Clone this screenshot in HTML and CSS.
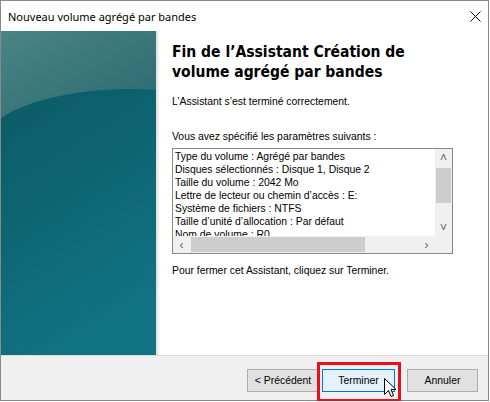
FILE: index.html
```html
<!DOCTYPE html>
<html lang="fr">
<head>
  <meta charset="UTF-8" />
  <title>Nouveau volume agrégé par bandes</title>
  <link rel="stylesheet" href="styles.css">
</head>

<body>
  <div class="window">
    <!-- Title bar -->
    <div class="title-bar">
      <span class="title">Nouveau volume agrégé par bandes</span>
      <svg class="close-icon" width="11" height="11" viewBox="0 0 11 11">
        <path d="M0.5 0.5 L10.5 10.5 M10.5 0.5 L0.5 10.5" stroke="#000" stroke-width="1" fill="none" />
      </svg>
    </div>

    <div class="wizard-body">
      <!-- Left banner -->
      <div class="side-panel">
        <svg width="156" height="325" viewBox="0 0 156 325">
          <defs>
            <linearGradient id="topGrad" x1="0" y1="0" x2="1" y2="1">
              <stop offset="0" stop-color="#4a8485" />
              <stop offset="1" stop-color="#2a6a70" />
            </linearGradient>
            <linearGradient id="lowGrad" x1="0" y1="0" x2="0.3" y2="1">
              <stop offset="0" stop-color="#0a5761" />
              <stop offset="0.6" stop-color="#0e6673" />
              <stop offset="1" stop-color="#117283" />
            </linearGradient>
          </defs>
          <rect width="156" height="325" fill="url(#lowGrad)" />
          <path d="M0 0 H156 V59 C100 55 35 64 0 87 Z" fill="url(#topGrad)" />
        </svg>
      </div>
      <div class="side-shadow"></div>

      <!-- Main content -->
      <div class="content">
        <h1>Fin de l’Assistant Création de volume agrégé par bandes</h1>
        <p class="status">L’Assistant s’est terminé correctement.</p>
        <p class="label">Vous avez spécifié les paramètres suivants :</p>

        <div class="listbox">
          <div class="list-view">
            <div class="list-lines">
              <div>Type du volume : Agrégé par bandes</div>
              <div>Disques sélectionnés : Disque 1, Disque 2</div>
              <div>Taille du volume : 2042 Mo</div>
              <div>Lettre de lecteur ou chemin d’accès : E:</div>
              <div>Système de fichiers : NTFS</div>
              <div>Taille d’unité d’allocation : Par défaut</div>
              <div>Nom de volume : R0</div>
            </div>
            <div class="vscroll">
              <span class="arrow">&#x2C4;</span>
              <div class="vtrack"><div class="vthumb"></div></div>
              <span class="arrow">&#x2C5;</span>
            </div>
          </div>
          <div class="hscroll">
            <span class="arrow">&lsaquo;</span>
            <div class="htrack"><div class="hthumb"></div></div>
            <span class="arrow">&rsaquo;</span>
            <div class="corner"></div>
          </div>
        </div>

        <p class="hint">Pour fermer cet Assistant, cliquez sur Terminer.</p>
      </div>
    </div>

    <!-- Button row -->
    <div class="footer">
      <button class="btn">&lt; Précédent</button>
      <div class="finish-wrap">
        <button class="btn btn-default">Terminer</button>
        <div class="highlight"></div>
        <svg class="cursor" width="13" height="21" viewBox="0 0 13 21">
          <path d="M0.5 0.5 V16.5 L4.5 12.5 L7 18.5 L9.5 17.5 L7 11.5 H12 Z" fill="#fff" stroke="#000" stroke-width="1" stroke-linejoin="miter" />
        </svg>
      </div>
      <button class="btn btn-cancel">Annuler</button>
    </div>
  </div>
</body>
</html>
```

FILE: styles.css
```css
body {
  margin: 0;
  background-color: #ffffff;
  font-family: 'Liberation Sans', Arial, sans-serif;
}

.window {
  width: 487px;
  height: 399px;
  border: 1px solid #8a8a8a;
  background-color: #ffffff;
  display: flex;
  flex-direction: column;
}

/* Title bar */
.title-bar {
  height: 30px;
  flex-shrink: 0;
  display: flex;
  align-items: center;
  justify-content: space-between;
  padding: 0 7px 0 7px;
}

.title {
  font-family: 'Noto Sans', sans-serif;
  font-size: 11px;
  color: #000;
}

/* Wizard body */
.wizard-body {
  display: flex;
  height: 324px;
  flex-shrink: 0;
}

.side-panel {
  width: 155px;
  overflow: hidden;
}

.side-panel svg {
  display: block;
}

.side-shadow {
  width: 4px;
  background: linear-gradient(to right, #dcdcdc, #ffffff);
}

.content {
  flex: 1;
  padding: 11px 12px 0 12px;
  font-size: 10.4px;
  color: #000;
}

h1 {
  font-family: 'DejaVu Sans Condensed', 'DejaVu Sans', sans-serif;
  font-weight: bold;
  font-size: 15.5px;
  line-height: 20px;
  margin: 0 0 13px 0;
  width: 250px;
}

p {
  margin: 0;
  line-height: 14px;
}

.status {
  margin-bottom: 21px;
}

.label {
  margin-bottom: 4px;
}

.hint {
  margin-top: 10px;
}

/* Listbox */
.listbox {
  width: 279px;
  border: 1px solid #828790;
}

.list-view {
  display: flex;
  height: 87px;
}

.list-lines {
  flex: 1;
  padding: 1px 0 0 2px;
  line-height: 13px;
  overflow: hidden;
  white-space: nowrap;
}

.vscroll {
  width: 17px;
  display: flex;
  flex-direction: column;
  background-color: #f0f0f0;
}

.vtrack {
  flex: 1;
  padding-top: 2px;
}

.vthumb {
  width: 15px;
  height: 35px;
  margin: 0 auto;
  background-color: #cdcdcd;
}

.arrow {
  height: 17px;
  width: 17px;
  display: flex;
  align-items: center;
  justify-content: center;
  color: #606060;
  font-size: 12px;
  flex-shrink: 0;
}

.hscroll {
  display: flex;
  height: 17px;
  background-color: #f0f0f0;
}

.htrack {
  flex: 1;
  display: flex;
  align-items: center;
  padding-left: 1px;
}

.hthumb {
  width: 174px;
  height: 15px;
  background-color: #cdcdcd;
}

.corner {
  width: 17px;
  background-color: #f0f0f0;
}

/* Footer */
.footer {
  flex: 1;
  border-top: 1px solid #dadada;
  background-color: #f0f0f0;
  display: flex;
  align-items: flex-start;
  padding: 13px 10px 0 0;
  justify-content: flex-end;
  box-sizing: border-box;
}

.btn {
  width: 72px;
  height: 23px;
  font-family: 'Liberation Sans', Arial, sans-serif;
  font-size: 10.4px;
  color: #000;
  background-color: #e1e1e1;
  border: 1px solid #adadad;
  padding: 0;
}

.finish-wrap {
  position: relative;
  margin-left: 3px;
}

.btn-default {
  width: 73px;
  background-color: #e5f1fb;
  border-color: #0078d7;
  display: block;
}

.btn-cancel {
  width: 71px;
  margin-left: 12px;
}

.highlight {
  position: absolute;
  left: -5px;
  top: -7px;
  width: 78px;
  height: 34px;
  border: 3px solid #e8101a;
}

.cursor {
  position: absolute;
  left: 62px;
  top: 9px;
}
```
